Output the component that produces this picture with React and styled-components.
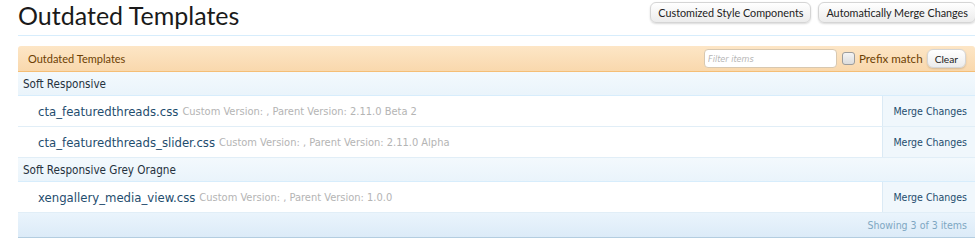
import React from 'react';
import styled, { createGlobalStyle } from 'styled-components';

const GlobalStyle = createGlobalStyle`
  body {
    margin: 0;
    background: #ffffff;
    font-family: "DejaVu Sans Condensed", "DejaVu Sans", sans-serif;
  }
`;

const Page = styled.div`
  margin-left: 18px;
  width: 957px;
`;

const TitleBar = styled.div`
  display: flex;
  justify-content: space-between;
  align-items: flex-start;
  height: 35px;
  border-bottom: 1px solid #d7edfc;
`;

const Title = styled.h1`
  margin: 0;
  font-family: Lato, "Open Sans", sans-serif;
  font-weight: 400;
  font-size: 25px;
  line-height: 30px;
  color: #1a1a1a;
`;

const TopButtons = styled.div`
  display: flex;
  gap: 7px;
  padding-top: 2px;
  margin-right: -1px;
`;

const Button = styled.button`
  font-family: Lato, "Open Sans", sans-serif;
  font-size: ${(p) => (p.$small ? '10.2px' : '10.8px')};
  color: #222;
  height: ${(p) => (p.$small ? '19px' : '21px')};
  padding: 0 7px;
  border: 1px solid #d5d5d5;
  border-radius: 6px;
  background: linear-gradient(to bottom, #ffffff, #ececec);
  box-shadow: 0 1px 2px rgba(0, 0, 0, 0.15);
  cursor: pointer;
`;

const Section = styled.div`
  margin-top: 10px;
`;

const SectionHead = styled.div`
  display: flex;
  align-items: center;
  justify-content: space-between;
  height: 25px;
  padding-left: 10px;
  background: linear-gradient(to bottom, #fde6c6, #f9d8ad);
  border-bottom: 1px solid #f5be76;
  border-radius: 3px 3px 0 0;
  font-family: Lato, "Open Sans", sans-serif;
  font-size: 11px;
  color: #6d3f03;
`;

const FilterControls = styled.div`
  display: flex;
  align-items: center;
  padding-right: 9px;
`;

const FilterInput = styled.input`
  width: 133px;
  height: 19px;
  box-sizing: border-box;
  border: 1px solid #d8c8b0;
  border-radius: 4px;
  background: #fff;
  font-family: "DejaVu Sans Condensed", sans-serif;
  font-size: 9px;
  font-style: italic;
  padding: 0 3px;
  &::placeholder {
    color: #b5b5b5;
  }
`;

const Check = styled.span`
  display: inline-block;
  width: 11px;
  height: 11px;
  margin: 0 4px 0 5px;
  border: 1px solid #9d9d9d;
  border-radius: 3px;
  background: linear-gradient(to bottom, #f4f4f4, #dcdcdc);
`;

const CheckLabel = styled.label`
  font-family: Lato, "Open Sans", sans-serif;
  font-size: 11.6px;
  color: #6d3f03;
  margin-right: 4px;
`;

const Group = styled.div`
  height: 23px;
  display: flex;
  align-items: center;
  padding-left: 5px;
  background: linear-gradient(to bottom, #f3f9fd, #eaf4fb);
  border-bottom: 1px solid #d7edfc;
  font-size: 11.6px;
  color: #25313d;
`;

const Row = styled.div`
  display: flex;
  height: 30px;
  border-bottom: 1px solid #e1eef7;
  background: #ffffff;
`;

const Info = styled.div`
  flex: 1;
  display: flex;
  align-items: center;
  gap: 4px;
  padding-left: 20px;
  white-space: nowrap;
`;

const FileName = styled.a`
  font-size: 13px;
  color: #1f4d6e;
  text-decoration: none;
`;

const Muted = styled.span`
  font-size: 11px;
  color: #b4b4b4;
`;

const ActionCell = styled.div`
  width: 93px;
  display: flex;
  align-items: center;
  justify-content: flex-end;
  padding-right: 8px;
  box-sizing: border-box;
  background: #f0f7fc;
  border-left: 1px solid #dbeaf5;
`;

const ActionLink = styled.a`
  font-size: 10.5px;
  color: #1f4d6e;
  text-decoration: none;
`;

const Footer = styled.div`
  height: 24px;
  display: flex;
  align-items: center;
  justify-content: flex-end;
  padding-right: 8px;
  background: linear-gradient(to bottom, #eaf4fc, #dcebf8);
  border-bottom: 1px solid #b3cde0;
  font-size: 10.5px;
  color: #7ea7c2;
`;

const groups = [
  {
    name: 'Soft Responsive',
    items: [
      { file: 'cta_featuredthreads.css', parent: '2.11.0 Beta 2' },
      { file: 'cta_featuredthreads_slider.css', parent: '2.11.0 Alpha' },
    ],
  },
  {
    name: 'Soft Responsive Grey Oragne',
    items: [{ file: 'xengallery_media_view.css', parent: '1.0.0' }],
  },
];

export default function App() {
  return (
    <Page>
      <GlobalStyle />
      <TitleBar>
        <Title>Outdated Templates</Title>
        <TopButtons>
          <Button>Customized Style Components</Button>
          <Button>Automatically Merge Changes</Button>
        </TopButtons>
      </TitleBar>
      <Section>
        <SectionHead>
          <span>Outdated Templates</span>
          <FilterControls>
            <FilterInput placeholder="Filter items" />
            <Check />
            <CheckLabel>Prefix match</CheckLabel>
            <Button $small>Clear</Button>
          </FilterControls>
        </SectionHead>
        {groups.map((g) => (
          <React.Fragment key={g.name}>
            <Group>{g.name}</Group>
            {g.items.map((it) => (
              <Row key={it.file}>
                <Info>
                  <FileName href="#">{it.file}</FileName>
                  <Muted>Custom Version: , Parent Version: {it.parent}</Muted>
                </Info>
                <ActionCell>
                  <ActionLink href="#">Merge Changes</ActionLink>
                </ActionCell>
              </Row>
            ))}
          </React.Fragment>
        ))}
        <Footer>Showing 3 of 3 items</Footer>
      </Section>
    </Page>
  );
}
